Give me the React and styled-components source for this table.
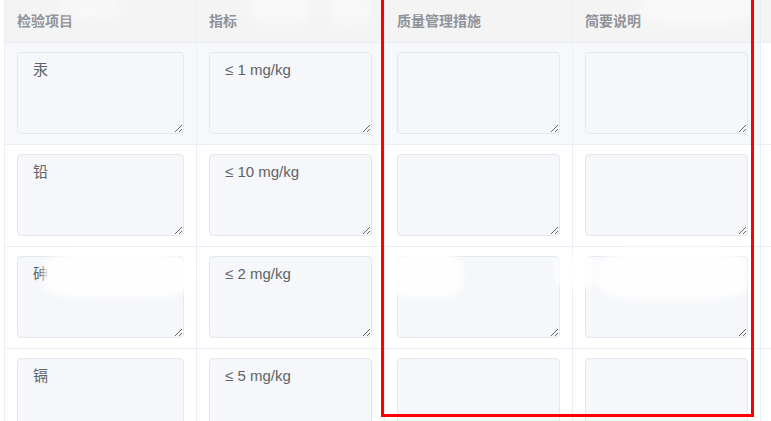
import React from "react";
import styled, { createGlobalStyle } from "styled-components";

const Global = createGlobalStyle`
  html, body { margin: 0; padding: 0; background: #ffffff; overflow: hidden; }
  body { font-family: "Liberation Sans", "Noto Sans CJK SC", sans-serif; }
`;

const Page = styled.div`
  position: relative;
  width: 771px;
  height: 421px;
  overflow: hidden;
  padding-left: 4px;
  box-sizing: border-box;
`;

const Grid = styled.div`
  display: grid;
  grid-template-columns: 192px 188px 188px 188px 200px;
  border-left: 1px solid #ebeef5;
  width: max-content;
`;

const HeadCell = styled.div`
  box-sizing: border-box;
  height: 43px;
  padding: 0 12px 3px;
  display: flex;
  align-items: center;
  background: #f4f4f5;
  border-right: 1px solid #ebeef5;
  border-bottom: 1px solid #ebeef5;
  color: #909399;
  font-family: "Noto Sans CJK SC", "Liberation Sans", sans-serif;
  font-size: 14px;
  font-weight: 700;
  white-space: nowrap;
`;

const Cell = styled.div`
  box-sizing: border-box;
  padding: 9px 12px 10px;
  background: ${(p) => (p.$hover ? "#f7f8fa" : "#ffffff")};
  border-right: 1px solid #ebeef5;
  border-bottom: 1px solid #ebeef5;
`;

const Field = styled.textarea`
  display: block;
  box-sizing: border-box;
  width: 100%;
  height: 82px;
  margin: 0;
  padding: 6px 15px 5px;
  resize: vertical;
  background: #f5f7fa;
  border: 1px solid #e4e7ed;
  border-radius: 4px;
  color: #606266;
  font-family: "Liberation Sans", "Noto Sans CJK SC", sans-serif;
  font-size: 15px;
  line-height: 1.5;
  outline: none;
`;

const Smudge = styled.div`
  position: absolute;
  left: ${(p) => p.$x}px;
  top: ${(p) => p.$y}px;
  width: ${(p) => p.$w}px;
  height: ${(p) => p.$h}px;
  background: #ffffff;
  opacity: ${(p) => p.$o};
  filter: blur(${(p) => p.$b}px);
  border-radius: 30%;
  pointer-events: none;
`;

const Highlight = styled.div`
  position: absolute;
  left: 381px;
  top: -10px;
  width: 373px;
  height: 427px;
  box-sizing: border-box;
  border: 3px solid #ff0000;
  pointer-events: none;
`;

const headers = ["检验项目", "指标", "质量管理措施", "简要说明", ""];

const rows = [
  { item: "汞", limit: "≤ 1 mg/kg" },
  { item: "铅", limit: "≤ 10 mg/kg" },
  { item: "砷", limit: "≤ 2 mg/kg" },
  { item: "镉", limit: "≤ 5 mg/kg" },
];

const smudges = [
  { x: 60, y: -6, w: 60, h: 26, o: 0.35, b: 5 },
  { x: 250, y: -6, w: 60, h: 30, o: 0.4, b: 5 },
  { x: 330, y: -4, w: 40, h: 28, o: 0.4, b: 4 },
  { x: 640, y: -6, w: 110, h: 30, o: 0.45, b: 5 },
  { x: 44, y: 252, w: 146, h: 46, o: 0.95, b: 3 },
  { x: 390, y: 252, w: 72, h: 46, o: 0.92, b: 3 },
  { x: 555, y: 254, w: 40, h: 34, o: 0.85, b: 3 },
  { x: 598, y: 250, w: 150, h: 50, o: 0.9, b: 3 },
];

export default function App() {
  return (
    <>
      <Global />
      <Page>
        <Grid>
          {headers.map((h, i) => (
            <HeadCell key={i}>{h}</HeadCell>
          ))}
          {rows.map((r, ri) => (
            <React.Fragment key={ri}>
              <Cell $hover={ri === 0}>
                <Field defaultValue={r.item} readOnly />
              </Cell>
              <Cell $hover={ri === 0}>
                <Field defaultValue={r.limit} readOnly />
              </Cell>
              <Cell $hover={ri === 0}>
                <Field defaultValue="" readOnly />
              </Cell>
              <Cell $hover={ri === 0}>
                <Field defaultValue="" readOnly />
              </Cell>
              <Cell>
                <Field defaultValue="" readOnly />
              </Cell>
            </React.Fragment>
          ))}
        </Grid>
        {smudges.map((s, i) => (
          <Smudge key={i} $x={s.x} $y={s.y} $w={s.w} $h={s.h} $o={s.o} $b={s.b} />
        ))}
        <Highlight />
      </Page>
    </>
  );
}
